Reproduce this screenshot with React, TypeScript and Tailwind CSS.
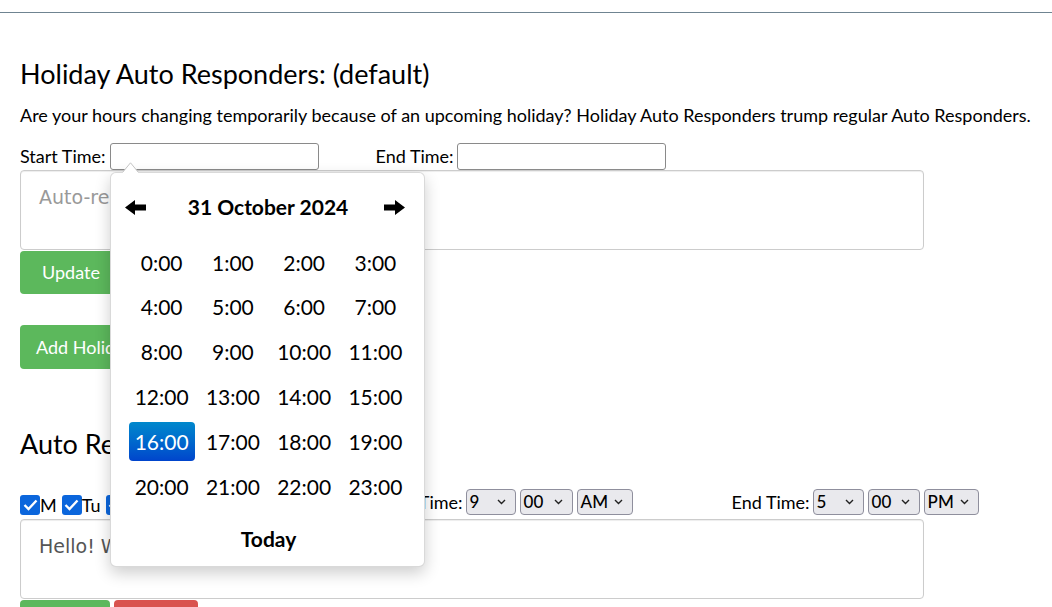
const HOURS = Array.from({ length: 24 }, (_, i) => `${i}:00`);
const DAYS = ["M", "Tu", "W", "Th", "F", "Sa", "Su"];

const Arrow = ({ dir }: { dir: "left" | "right" }) => (
  <svg width="21" height="15" viewBox="0 0 21 15" className={dir === "right" ? "-scale-x-100" : ""}>
    <polygon points="0,7.5 10,0 10,4.5 21,4.5 21,10.5 10,10.5 10,15" fill="#000" />
  </svg>
);

const Chevron = () => (
  <svg width="9" height="6" viewBox="0 0 9 6">
    <polyline points="1,1 4.5,4.5 8,1" fill="none" stroke="#222" strokeWidth="1.4" />
  </svg>
);

const Select = ({ value, width }: { value: string; width: string }) => (
  <span
    className={`${width} h-[26px] flex items-center justify-between pl-[3px] pr-[9px] border border-[#8f8f9d] rounded-[4px] bg-[#e9e9ed] text-[17px] font-medium`}
  >
    {value}
    <Chevron />
  </span>
);

const Check = () => (
  <span className="w-[20px] h-[20px] shrink-0 rounded-[3px] bg-[#0b66dc] flex items-center justify-center">
    <svg width="15" height="12" viewBox="0 0 15 12">
      <polyline points="1.5,6 5.5,10 13.5,1.5" fill="none" stroke="#fff" strokeWidth="2.4" />
    </svg>
  </span>
);

const TimePicker = () => (
  <div className="absolute left-[110px] top-[172px] w-[315px] bg-white border border-[rgba(0,0,0,0.15)] rounded-[6px] shadow-[0_6px_16px_rgba(0,0,0,0.2)] pl-[15px] pr-[13px] pt-[14px] pb-[7px] text-black">
    <svg width="17" height="11" viewBox="0 0 17 11" className="absolute left-[11px] top-[-11px]">
      <polygon points="0,11 8.5,0.5 17,11" fill="#fff" />
      <polyline points="0.5,10.5 8.5,0.8 16.5,10.5" fill="none" stroke="#c4c4c4" />
    </svg>

    <div className="h-[40px] flex items-center">
      <div className="w-[36px] flex justify-start -ml-[1px]">
        <Arrow dir="left" />
      </div>
      <div className="flex-1 text-center font-bold text-[21px]">31 October 2024</div>
      <div className="w-[36px] flex justify-end pr-[6px]">
        <Arrow dir="right" />
      </div>
    </div>

    <div className="mt-[13px] grid grid-cols-4">
      {HOURS.map((h) => (
        <div key={h} className="h-[44.8px] flex items-center justify-center text-[21px]">
          {h === "16:00" ? (
            <span className="w-[66px] h-[39px] flex items-center justify-center rounded-[4px] bg-linear-to-b from-[#0088cc] to-[#0044cc] text-white">
              {h}
            </span>
          ) : (
            h
          )}
        </div>
      ))}
    </div>

    <div className="mt-[10px] h-[40px] flex items-center justify-center font-bold text-[21px]">Today</div>
  </div>
);

export default function App() {
  return (
    <div className="relative h-[607px] overflow-hidden bg-white text-black font-['Lato','Liberation_Sans',sans-serif]">
      <div className="h-[12px]" />
      <div className="h-px bg-[#6f8491]" />

      <div className="px-[20px]">
        <h2 className="mt-[45px] text-[27px] leading-[32px]">Holiday Auto Responders: (default)</h2>
        <p className="mt-[13px] text-[18px] leading-[24px]">
          Are your hours changing temporarily because of an upcoming holiday? Holiday Auto Responders trump regular Auto Responders.
        </p>

        <div className="mt-[16px] h-[27px] flex items-center text-[18px]">
          <span>Start Time:</span>
          <input className="ml-[4px] w-[209px] h-[27px] border border-[#8a8a8a] rounded-[3px]" readOnly />
          <span className="ml-[57px]">End Time:</span>
          <input className="ml-[3px] w-[209px] h-[27px] border border-[#8a8a8a] rounded-[3px]" readOnly />
        </div>

        <textarea
          className="block w-[904px] h-[80px] border border-[#cccccc] rounded-[4px] px-[18px] pt-[12px] text-[19px] font-['DejaVu_Sans',sans-serif] resize-none shadow-[inset_0_1px_1px_rgba(0,0,0,0.075)] placeholder:text-[#999]"
          placeholder="Auto-response message"
          readOnly
        />
        <button className="mt-px h-[43px] px-[22px] bg-[#5cb85c] text-white text-[18px] rounded-[4px]">Update</button>

        <div>
          <button className="mt-[31px] h-[44px] px-[16px] bg-[#5cb85c] text-white text-[18px] rounded-[4px]">
            Add Holiday Auto Responder
          </button>
        </div>

        <h2 className="mt-[59px] text-[27px] leading-[32px]">Auto Responders</h2>

        <div className="mt-[29px] h-[26px] flex items-end text-[18px] leading-[20px]">
          <div className="w-[357px] shrink-0 flex items-end gap-[5px]">
            {DAYS.map((d) => (
              <span key={d} className="flex items-end">
                <Check />
                {d}
              </span>
            ))}
          </div>
          <div className="flex items-center h-[26px] gap-[4px]">
            <span className="mr-[-1px]">Start Time:</span>
            <Select value="9" width="w-[50px]" />
            <Select value="00" width="w-[53px]" />
            <Select value="AM" width="w-[56px]" />
            <span className="ml-[95px] mr-[-1px]">End Time:</span>
            <Select value="5" width="w-[51px]" />
            <Select value="00" width="w-[52px]" />
            <Select value="PM" width="w-[55px]" />
          </div>
        </div>

        <textarea
          className="mt-[4px] block w-[904px] h-[80px] border border-[#cccccc] rounded-[4px] px-[18px] pt-[12px] text-[19px] text-[#555] font-['DejaVu_Sans',sans-serif] resize-none shadow-[inset_0_1px_1px_rgba(0,0,0,0.075)]"
          value="Hello! We are closed right now."
          readOnly
        />
        <div className="mt-px flex gap-[4px]">
          <button className="h-[43px] w-[90px] bg-[#5cb85c] text-white text-[18px] rounded-[4px]">Update</button>
          <button className="h-[43px] w-[84px] bg-[#d9534f] text-white text-[18px] rounded-[4px]">Delete</button>
        </div>
      </div>

      <TimePicker />
    </div>
  );
}
